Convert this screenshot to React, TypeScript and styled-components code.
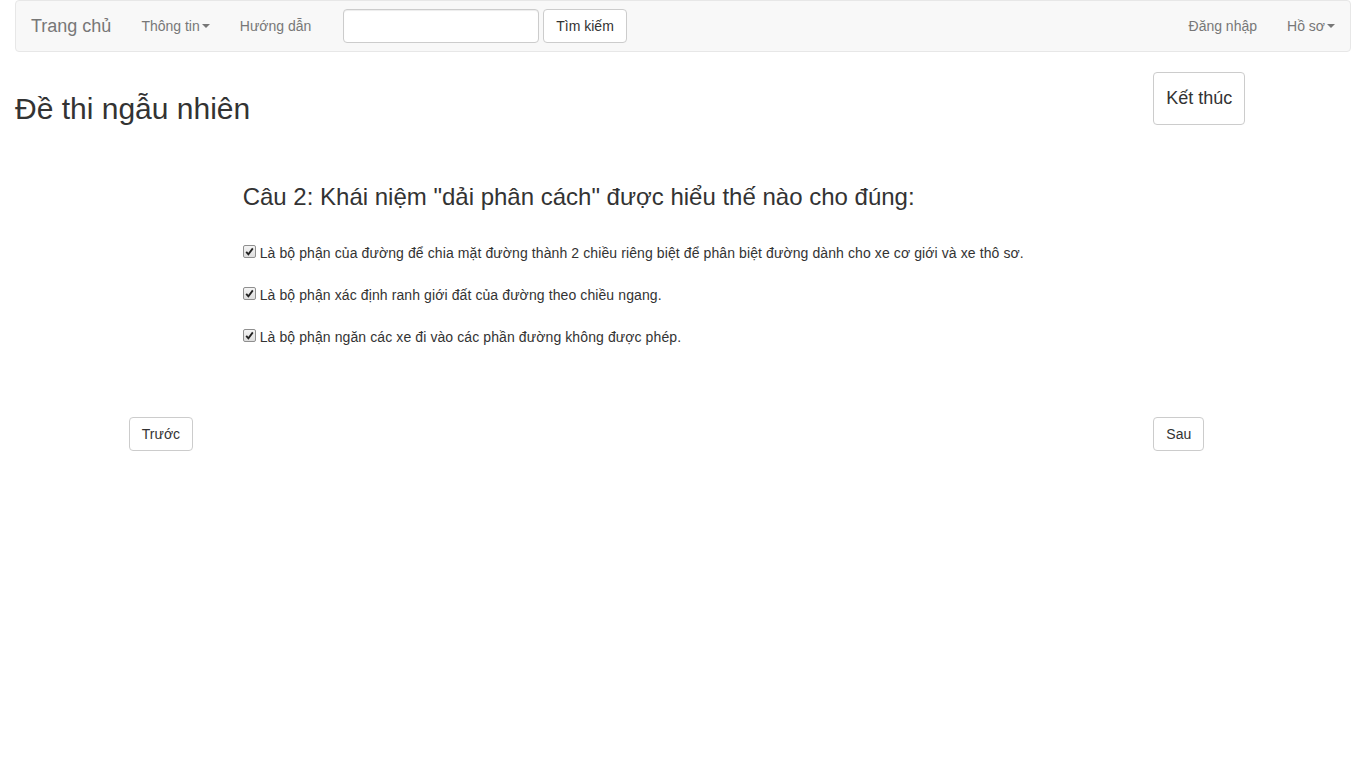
import React from "react";
import styled, { createGlobalStyle } from "styled-components";

const Global = createGlobalStyle`
  html, body { margin: 0; padding: 0; background: #fff; }
  body {
    font-family: "Liberation Sans", Arial, Helvetica, sans-serif;
    font-size: 14px;
    line-height: 1.42857;
    color: #333;
  }
  * { box-sizing: border-box; }
`;

const Page = styled.div`
  padding: 0 15px;
`;

const Navbar = styled.nav`
  display: flex;
  align-items: center;
  min-height: 52px;
  background: #f8f8f8;
  border: 1px solid #e7e7e7;
  border-radius: 4px;
  margin-bottom: 20px;
`;

const Brand = styled.a`
  font-size: 18px;
  line-height: 20px;
  color: #777;
  padding: 15px;
  text-decoration: none;
`;

const NavLink = styled.a`
  font-size: 14px;
  line-height: 20px;
  color: #777;
  padding: 15px;
  text-decoration: none;
  display: flex;
  align-items: center;
`;

const Caret = styled.span`
  display: inline-block;
  width: 0;
  height: 0;
  margin-left: 2px;
  border-top: 4px solid #777;
  border-left: 4px solid transparent;
  border-right: 4px solid transparent;
`;

const SearchForm = styled.form`
  display: flex;
  gap: 4px;
  margin-left: 17px;
`;

const SearchInput = styled.input`
  width: 196px;
  height: 34px;
  padding: 6px 12px;
  font-family: inherit;
  font-size: 14px;
  border: 1px solid #ccc;
  border-radius: 4px;
  box-shadow: inset 0 1px 1px rgba(0, 0, 0, 0.075);
  background: #fff;
`;

const Button = styled.button<{ $size?: "lg" }>`
  font-family: inherit;
  font-size: ${(p) => (p.$size === "lg" ? "18px" : "14px")};
  line-height: ${(p) => (p.$size === "lg" ? "24px" : "20px")};
  padding: ${(p) => (p.$size === "lg" ? "13px 12px 14px" : "6px 12px")};
  color: #333;
  background: #fff;
  border: 1px solid #ccc;
  border-radius: 4px;
  cursor: pointer;
  white-space: nowrap;
`;

const Spacer = styled.div`
  flex: 1;
`;

const Row = styled.div<{ $mt?: number }>`
  display: grid;
  grid-template-columns: repeat(12, 1fr);
  margin: ${(p) => p.$mt ?? 0}px -15px 0;
`;

const Col = styled.div<{ $start: number; $span: number }>`
  grid-column: ${(p) => p.$start} / span ${(p) => p.$span};
  padding: 0 15px;
  min-width: 0;
`;

const Title = styled.h2`
  font-size: 30px;
  font-weight: 500;
  line-height: 1.1;
  margin: 20px 0 10px;
  color: #333;
`;

const Question = styled.h3`
  font-size: 24px;
  font-weight: 500;
  line-height: 1.1;
  margin: 20px 0 10px;
  color: #333;
`;

const Options = styled.div`
  display: flex;
  flex-direction: column;
  gap: 22px;
  margin-top: 33px;
`;

const Option = styled.label`
  display: flex;
  align-items: center;
  gap: 4px;
  font-size: 14px;
  line-height: 20px;
  color: #333;
  letter-spacing: 0.1px;
`;

const Box = styled.span`
  width: 13px;
  height: 13px;
  border: 1px solid #8f8f8f;
  border-radius: 2px;
  background: linear-gradient(#f4f4f4, #dedede);
  display: inline-flex;
  align-items: center;
  justify-content: center;
  margin-top: -3px;
  flex: none;
`;

const Check = () => (
  <Box>
    <svg width="9" height="9" viewBox="0 0 9 9">
      <path d="M1.2 4.8 L3.4 7.4 L7.8 1.4" stroke="#222" strokeWidth="1.8" fill="none" />
    </svg>
  </Box>
);

const options = [
  "Là bộ phận của đường để chia mặt đường thành 2 chiều riêng biệt để phân biệt đường dành cho xe cơ giới và xe thô sơ.",
  "Là bộ phận xác định ranh giới đất của đường theo chiều ngang.",
  "Là bộ phận ngăn các xe đi vào các phần đường không được phép.",
];

export default function App() {
  return (
    <Page>
      <Global />
      <Navbar>
        <Brand href="#">Trang chủ</Brand>
        <NavLink href="#">
          Thông tin<Caret />
        </NavLink>
        <NavLink href="#">Hướng dẫn</NavLink>
        <SearchForm onSubmit={(e) => e.preventDefault()}>
          <SearchInput type="text" />
          <Button type="submit">Tìm kiếm</Button>
        </SearchForm>
        <Spacer />
        <NavLink href="#">Đăng nhập</NavLink>
        <NavLink href="#">
          Hồ sơ<Caret />
        </NavLink>
      </Navbar>

      <Row>
        <Col $start={1} $span={10}>
          <Title>Đề thi ngẫu nhiên</Title>
        </Col>
        <Col $start={11} $span={2}>
          <Button $size="lg">Kết thúc</Button>
        </Col>
      </Row>

      <Row $mt={29}>
        <Col $start={3} $span={8}>
          <Question>Câu 2: Khái niệm "dải phân cách" được hiểu thế nào cho đúng:</Question>
          <Options>
            {options.map((o) => (
              <Option key={o}>
                <Check />
                {o}
              </Option>
            ))}
          </Options>
        </Col>
      </Row>

      <Row $mt={70}>
        <Col $start={2} $span={2}>
          <Button>Trước</Button>
        </Col>
        <Col $start={11} $span={2}>
          <Button>Sau</Button>
        </Col>
      </Row>
    </Page>
  );
}
